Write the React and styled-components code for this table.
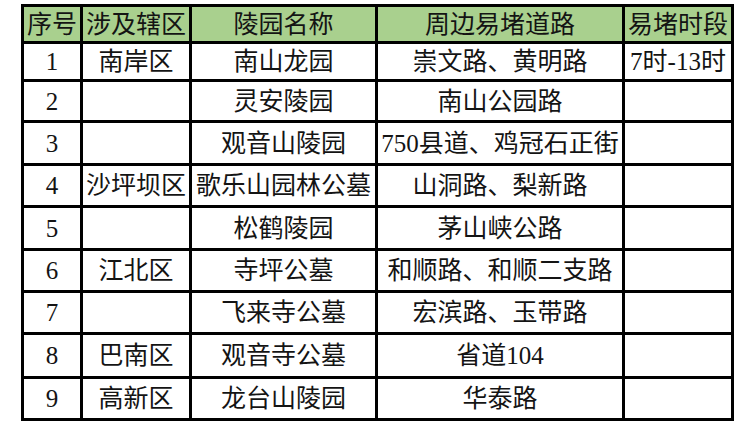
import React from 'react';
import styled, { createGlobalStyle } from 'styled-components';

const GlobalStyle = createGlobalStyle`
  html, body {
    margin: 0;
    padding: 0;
    background: #ffffff;
  }
`;

const Page = styled.div`
  padding: 4px 0 0 21px;
`;

const Table = styled.table`
  border-collapse: collapse;
  table-layout: fixed;
  width: 712px;
  font-family: "Liberation Serif", "Times New Roman", "Noto Sans CJK SC", serif;
  font-size: 25px;
  line-height: 1;
  color: #141414;
`;

const HeadCell = styled.th`
  background: #a9d08e;
  border: 3px solid #000;
  font-family: inherit;
  font-weight: normal;
  text-align: center;
  padding: 0;
  white-space: nowrap;
  overflow: hidden;
`;

const Cell = styled.td`
  border: 3px solid #000;
  font-family: inherit;
  text-align: center;
  padding: 0;
  white-space: nowrap;
  overflow: hidden;
`;

const Row = styled.tr`
  height: ${({ $h }) => $h}px;
`;

const columns = [
  { title: '序号', width: 59 },
  { title: '涉及辖区', width: 109 },
  { title: '陵园名称', width: 186 },
  { title: '周边易堵道路', width: 247 },
  { title: '易堵时段', width: 109 },
];

const rows = [
  { no: '1', district: '南岸区', name: '南山龙园', road: '崇文路、黄明路', time: '7时-13时', h: 38 },
  { no: '2', district: '', name: '灵安陵园', road: '南山公园路', time: '', h: 41 },
  { no: '3', district: '', name: '观音山陵园', road: '750县道、鸡冠石正街', time: '', h: 43 },
  { no: '4', district: '沙坪坝区', name: '歌乐山园林公墓', road: '山洞路、梨新路', time: '', h: 42 },
  { no: '5', district: '', name: '松鹤陵园', road: '茅山峡公路', time: '', h: 43 },
  { no: '6', district: '江北区', name: '寺坪公墓', road: '和顺路、和顺二支路', time: '', h: 42 },
  { no: '7', district: '', name: '飞来寺公墓', road: '宏滨路、玉带路', time: '', h: 42 },
  { no: '8', district: '巴南区', name: '观音寺公墓', road: '省道104', time: '', h: 44 },
  { no: '9', district: '高新区', name: '龙台山陵园', road: '华泰路', time: '', h: 42 },
];

export default function App() {
  return (
    <Page>
      <GlobalStyle />
      <Table>
        <colgroup>
          {columns.map(c => (
            <col key={c.title} style={{ width: c.width }} />
          ))}
        </colgroup>
        <thead>
          <Row $h={37}>
            {columns.map(c => (
              <HeadCell key={c.title}>{c.title}</HeadCell>
            ))}
          </Row>
        </thead>
        <tbody>
          {rows.map(r => (
            <Row key={r.no} $h={r.h}>
              <Cell>{r.no}</Cell>
              <Cell>{r.district}</Cell>
              <Cell>{r.name}</Cell>
              <Cell>{r.road}</Cell>
              <Cell>{r.time}</Cell>
            </Row>
          ))}
        </tbody>
      </Table>
    </Page>
  );
}
